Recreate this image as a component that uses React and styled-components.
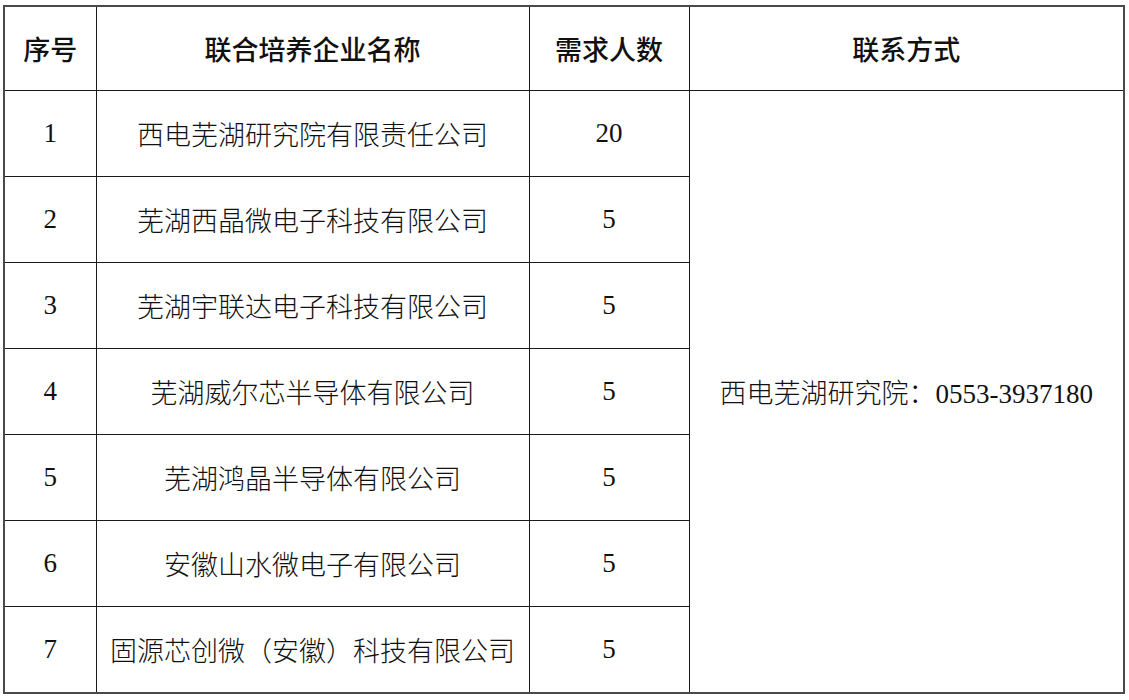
import React from "react";
import styled, { createGlobalStyle } from "styled-components";

const Global = createGlobalStyle`
  html, body { margin: 0; padding: 0; background: #fff; }
  body { padding: 5px 0 0 3px; }
`;

const Table = styled.table`
  border-collapse: collapse;
  table-layout: fixed;
  width: 1120px;
  border: 2px solid #4a4a4a;
  font-family: "Liberation Serif", "Noto Sans CJK SC", serif;
  color: #111;
`;

const Col = styled.col`
  width: ${(p) => p.$w}px;
`;

const HeadCell = styled.th`
  height: 83px;
  padding: 0;
  border: 1px solid #1a1a1a;
  font-family: "Noto Sans CJK SC", sans-serif;
  font-weight: 500;
  font-size: 27px;
  text-align: center;
  vertical-align: middle;
  color: #111;
`;

const Cell = styled.td`
  height: 85px;
  padding: 0;
  border: 1px solid #1a1a1a;
  font-size: 27px;
  font-weight: 300;
  text-align: center;
  vertical-align: middle;
  white-space: nowrap;
`;

const rows = [
  ["1", "西电芜湖研究院有限责任公司", "20"],
  ["2", "芜湖西晶微电子科技有限公司", "5"],
  ["3", "芜湖宇联达电子科技有限公司", "5"],
  ["4", "芜湖威尔芯半导体有限公司", "5"],
  ["5", "芜湖鸿晶半导体有限公司", "5"],
  ["6", "安徽山水微电子有限公司", "5"],
  ["7", "固源芯创微（安徽）科技有限公司", "5"],
];

export default function App() {
  return (
    <>
      <Global />
      <Table>
        <colgroup>
          <Col $w={92} />
          <Col $w={433} />
          <Col $w={160} />
          <Col $w={435} />
        </colgroup>
        <thead>
          <tr>
            <HeadCell>序号</HeadCell>
            <HeadCell>联合培养企业名称</HeadCell>
            <HeadCell>需求人数</HeadCell>
            <HeadCell>联系方式</HeadCell>
          </tr>
        </thead>
        <tbody>
          {rows.map((r, i) => (
            <tr key={r[0]}>
              <Cell>{r[0]}</Cell>
              <Cell>{r[1]}</Cell>
              <Cell>{r[2]}</Cell>
              {i === 0 && <Cell rowSpan={7}>西电芜湖研究院：0553-3937180</Cell>}
            </tr>
          ))}
        </tbody>
      </Table>
    </>
  );
}
